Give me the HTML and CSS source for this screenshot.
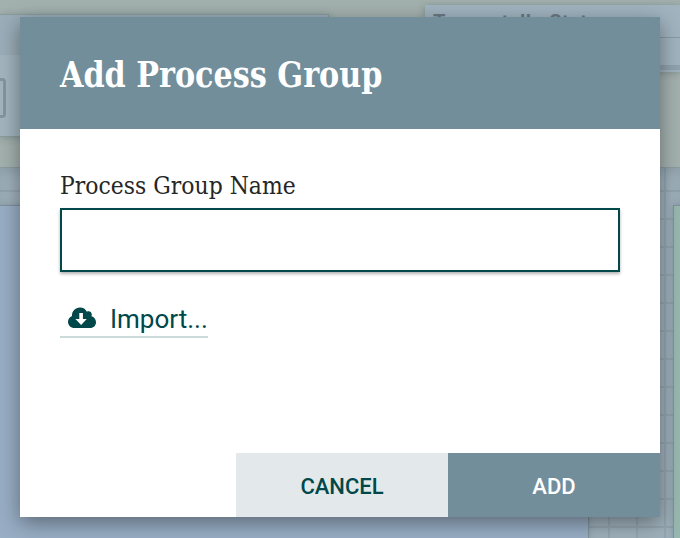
FILE: index.html
```html
<!DOCTYPE html>
<html lang="en">
<head>
<meta charset="utf-8">
<title>Add Process Group</title>
<link rel="stylesheet" href="styles.css">
</head>
<body>
<div class="app">
  <div class="toolbar">
    <div class="palette"><div class="palette-head"></div><div class="tool"></div></div>
    <div class="status"><div class="status-title">Tangentally State</div><div class="status-row"></div></div>
  </div>
  <div class="canvas">
    <div class="node node-blue"></div>
    <div class="node node-green"></div>
  </div>
</div>
<div class="overlay">
  <section class="dialog">
    <header class="dialog-header"><h1>Add Process Group</h1></header>
    <div class="dialog-body">
      <label class="label" for="name"><span>Process Group Name</span></label>
      <input class="field" id="name" type="text">
      <a class="import">
        <svg class="cloud" viewBox="0 0 28 21"><path d="M6.500 21C2.800 21 0 18.200 0 14.700C0 12 1.600 9.900 4 8.900C3.700 4.200 7.300 .500 12 .500C15.200 .500 17.600 2.100 18.900 4.700C21.700 3.300 24.800 5.900 23.500 9.300C26.200 10.100 28 12.400 28 15.200C28 18.500 25.500 21 22.200 21Z"/><path class="arrow" d="M11.300 6h3.600v6h3.900L13.100 18L7.400 12h3.900z"/></svg>
        <span>Import...</span>
      </a>
    </div>
    <footer class="actions"><button class="cancel">CANCEL</button><button class="add">ADD</button></footer>
  </section>
</div>
</body>
</html>
```
FILE: styles.css
```css
* { box-sizing: border-box; }
body { margin: 0; overflow: hidden; font-family: Roboto, sans-serif; }
.app { width: 680px; height: 538px; overflow: hidden; background: #a3b0b0; }
.toolbar { height: 167px; display: flex; justify-content: space-between; align-items: flex-start; background: #a3b1ae; }
.palette { width: 329px; height: 123px; margin-top: 14px; background: #a2b4bf; border: 1px solid #899b9d; border-left: 0; box-shadow: 0 1px 7px rgba(60, 80, 80, .3); }
.palette-head { height: 40px; background: #9aadb8; }
.tool { width: 6px; height: 40px; margin-top: 23px; border: 3px solid #87939e; border-left: 0; border-radius: 0 4px 4px 0; }
.status { width: 255px; height: 67px; margin-top: 5px; background: #a0b3bf; border-bottom: 2px solid #a0b1bd; box-shadow: 0 1px 7px rgba(60, 80, 80, .35); }
.status-title { height: 33px; padding: 5px 8px; font-size: 20px; line-height: 25px; font-weight: 700; letter-spacing: .4px; word-spacing: 2px; color: #6b7982; border-bottom: 1px solid #8799a3; white-space: nowrap; }
.status-row { height: 32px; border-bottom: 5px solid #8fa2ae; }
.canvas { position: relative; height: 371px; border-top: 1px solid #8b9c9f; background: repeating-linear-gradient(90deg, transparent 0 20px, #94a6b0 20px 22px, transparent 22px 28px), repeating-linear-gradient(#9fb1bc 0 22px, #94a6b0 22px 24px, #9fb1bc 24px 28px); box-shadow: inset 0 5px 8px rgba(60, 80, 80, .15); }
.node { position: absolute; top: 37px; bottom: -2px; border: 1px solid #7f929b; box-shadow: 0 0 6px rgba(60, 80, 90, .25); }
.node-blue { left: -2px; width: 591px; background: #98aec5; }
.node-green { left: 673px; width: 20px; background: #96b7af; }
.overlay { position: absolute; inset: 0; padding: 17px 20px 21px; }
.dialog { height: 500px; display: flex; flex-direction: column; background: #fff; box-shadow: 0 6px 20px rgba(0, 0, 0, .4); }
.dialog-header { height: 112px; padding: 3px 40px 0; display: flex; align-items: center; background: #728e9b; }
h1 { margin: 0; font: bold 35px/48px "Roboto Slab", "DejaVu Serif", serif; color: #fff; white-space: nowrap; transform: scaleX(.864); transform-origin: left; }
.dialog-body { flex: 1; padding: 39px 40px 0; display: flex; flex-direction: column; align-items: flex-start; }
.label { height: 40px; font: 23.5px/36px "Roboto Slab", "DejaVu Serif", serif; color: #262626; white-space: nowrap; }
.label span { display: inline-block; transform: scaleX(.934); transform-origin: left; }
.field { width: 560px; height: 64px; border: 2px solid #004849; border-radius: 0; padding: 0 20px; background: #fff; box-shadow: 0 2px 3px rgba(0, 0, 0, .3); font: 26px Roboto, sans-serif; outline: none; }
.import { width: 148px; height: 38px; margin-top: 28px; padding-left: 8px; display: flex; align-items: center; gap: 14px; border-bottom: 2px solid #ccdadb; color: #004849; font-size: 26px; line-height: 36px; white-space: nowrap; }
.import span { padding-top: 2px; }
.cloud { width: 28px; height: 21px; margin-bottom: 2px; flex: none; fill: #004849; }
.cloud .arrow { fill: #fff; }
.actions { height: 64px; display: flex; justify-content: flex-end; }
.actions button { width: 212px; border: 0; border-radius: 0; padding: 3px 0 0; font: 500 22px Roboto, sans-serif; }
.actions .cancel { background: #e3e8eb; color: #004849; }
.actions .add { background: #728e9b; color: #fff; }
```
